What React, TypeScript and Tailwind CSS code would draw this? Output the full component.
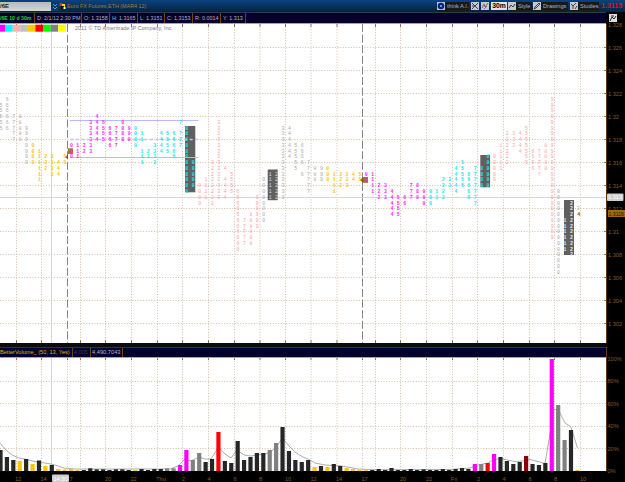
import type { ReactNode } from 'react';

const MAGENTA = '#ff1cf7';
const CYAN = '#19e6ee';
const PINK = '#ffa0a0';
const GREY = '#a9a9a9';
const GOLD = '#ffc400';
const DARK = '#262626';

const barX = (i: number) => 0.4 + i * 6.41;
const rowY = (k: number) => 116.5 + k * 5.76;

// each profile column: [bar index, color, rows as inclusive ranges]
type Column = [number, string, [number, number][]];

const columns: Column[] = [
  [0, GREY, [[-2, 2]]],
  [1, GREY, [[-3, 2]]],
  [2, GREY, [[0, 4]]],
  [3, GREY, [[0, 4]]],
  [4, GREY, [[2, 8]]],
  [5, GOLD, [[5, 8]]],
  [6, GOLD, [[6, 11]]],
  [7, GOLD, [[7, 9]]],
  [8, GOLD, [[7, 10]]],
  [9, GOLD, [[8, 10]]],
  [10, GOLD, [[7, 8]]],
  [11, MAGENTA, [[5, 7]]],
  [12, MAGENTA, [[5, 7]]],
  [13, MAGENTA, [[5, 6]]],
  [14, MAGENTA, [[1, 6]]],
  [15, MAGENTA, [[0, 4]]],
  [16, MAGENTA, [[1, 4]]],
  [17, MAGENTA, [[2, 5]]],
  [18, MAGENTA, [[2, 5]]],
  [19, MAGENTA, [[1, 4]]],
  [20, MAGENTA, [[2, 4]]],
  [21, CYAN, [[2, 5]]],
  [22, CYAN, [[3, 4], [6, 8]]],
  [23, CYAN, [[6, 7]]],
  [24, CYAN, [[5, 8]]],
  [25, CYAN, [[3, 6]]],
  [26, CYAN, [[3, 6]]],
  [27, CYAN, [[3, 5], [6, 7]]],
  [28, CYAN, [[1, 1], [3, 5]]],
  [29, CYAN, [[2, 13]]],
  [30, CYAN, [[8, 12]]],
  [31, PINK, [[12, 15]]],
  [32, PINK, [[11, 14]]],
  [33, PINK, [[8, 13], [14, 15]]],
  [34, PINK, [[1, 14]]],
  [35, PINK, [[9, 9], [11, 14]]],
  [36, PINK, [[10, 13]]],
  [37, PINK, [[13, 23]]],
  [38, PINK, [[18, 22]]],
  [39, PINK, [[17, 22]]],
  [40, PINK, [[14, 19]]],
  [41, GREY, [[11, 18]]],
  [42, GREY, [[10, 14]]],
  [43, GREY, [[10, 14]]],
  [44, GREY, [[2, 14]]],
  [45, GREY, [[2, 7]]],
  [46, GREY, [[5, 9]]],
  [47, GREY, [[5, 8], [10, 10]]],
  [48, GREY, [[8, 13]]],
  [49, GREY, [[9, 11]]],
  [50, GREY, [[9, 11]]],
  [51, GOLD, [[9, 11]]],
  [52, GOLD, [[10, 13]]],
  [53, GOLD, [[10, 12]]],
  [54, GOLD, [[10, 12]]],
  [55, GOLD, [[10, 11]]],
  [56, GOLD, [[10, 11]]],
  [57, MAGENTA, [[10, 11]]],
  [58, MAGENTA, [[10, 13]]],
  [59, MAGENTA, [[12, 14]]],
  [60, MAGENTA, [[12, 14]]],
  [61, MAGENTA, [[13, 17]]],
  [62, MAGENTA, [[14, 17]]],
  [63, MAGENTA, [[14, 15]]],
  [64, MAGENTA, [[12, 14]]],
  [65, MAGENTA, [[12, 14]]],
  [66, MAGENTA, [[13, 15]]],
  [67, CYAN, [[13, 15]]],
  [68, CYAN, [[13, 14]]],
  [69, CYAN, [[11, 14]]],
  [70, CYAN, [[11, 12]]],
  [71, CYAN, [[9, 13]]],
  [72, CYAN, [[8, 12]]],
  [73, CYAN, [[10, 14]]],
  [74, CYAN, [[9, 15]]],
  [75, CYAN, [[9, 12]]],
  [76, CYAN, [[7, 12]]],
  [77, PINK, [[7, 11]]],
  [78, PINK, [[5, 9]]],
  [79, PINK, [[3, 8]]],
  [80, PINK, [[3, 5]]],
  [81, PINK, [[3, 6]]],
  [82, PINK, [[2, 8]]],
  [83, PINK, [[6, 9]]],
  [84, PINK, [[6, 10]]],
  [85, PINK, [[5, 9]]],
  [86, PINK, [[-3, 21]]],
  [87, GREY, [[13, 27]]],
  [88, '#e0e0e0', [[18, 23]]],
  [89, '#f0f0f0', [[15, 24]]],
];

// index within the day session, 0-9
const digitFor = (i: number) => {
  const starts = [0, 5, 11, 21, 31, 41, 51, 57, 67, 77, 87];
  const start = starts.filter((s) => s <= i).pop() ?? 0;
  return String(start === 0 ? i + 5 : i - start);
};

const valueAreas = [
  { x: 185, y: 126, w: 10.3, h: 66.3 },
  { x: 267.7, y: 169.5, w: 10, h: 30.7 },
  { x: 480.3, y: 155, w: 9.8, h: 32.3 },
  { x: 564, y: 200, w: 10, h: 55 },
];

const volume = [
  21, 14, 11, 10, 12, 7, 10.5, 5, 6, 2, 1.5, 2, 1, 1, 2.7, 1.7, 1.7, 1, 1.7, 1.7, 1, 1, 2, 1, 2, 2, 2.7, 2.7, 6, 21,
  11, 18, 9, 12, 39, 10, 8, 30, 11, 14, 18, 18, 21, 28, 44, 20, 11, 9, 11, 4, 5, 4, 7, 5, 3, 2, 1, 0.8, 1, 2,
  1, 3, 1, 1, 2, 1, 1.7, 1, 1, 2, 1, 2, 3, 2, 7, 7, 8, 17, 14, 10, 7, 9, 15, 7, 6, 8, 112, 66, 31, 41, 1,
];

const volumeColors: Record<string, number[]> = {
  [GOLD]: [3, 5, 7, 9, 10, 11, 12, 21, 49, 51, 54, 55, 56, 57, 90],
  '#ff00ff': [28, 29, 74, 77, 86],
  '#808080': [26, 27, 30, 31, 42, 43, 75, 87, 88],
  '#ff0000': [34, 76],
  '#8b0000': [82],
};

const volumeColor = (i: number) =>
  Object.keys(volumeColors).find((c) => volumeColors[c].includes(i)) ?? DARK;

const averageLine =
  '0,443 6,450 12,455 19,458 25,459 32,461 38,462 45,463 51,464 58,466 64,468 75,469 170,469 178,466 185,459 191,461 199,457 205,459 211,459 218.5,447 225,454 231,458 237,450 244,455 251,456 257,455 264,454 270,453 276,447 282.5,438 289,446 295,452 302,456.5 308,459 315,463 325,465 342,466 358,469 375,469.7 450,469.5 470,468 478,465 488,463 495,459 502,459 515,461.5 523,461 530,459.5 540,462 545,463.5 549,440 554,409 559,411 565,423 571,427 577.5,448';

const verticals = [16.5, 41.5, 80.5, 105.5, 131.5, 157.5, 182.5, 208.5, 234.5, 260, 285.5, 311, 337, 375.5, 400.5, 426.5, 452.5, 477.5, 503.5, 529.5, 554.5, 580.5];
const dayBreaks = [67.5, 362.5];

const priceLabels = ['1.328', '1.326', '1.324', '1.322', '1.32', '1.318', '1.316', '1.314', '1.312', '1.31', '1.308', '1.306', '1.304', '1.302'];
const percentLabels = ['100%', '80%', '60%', '40%', '20%', '0%'];

const timeLabels: [number, string][] = [
  [18, '12'], [43.5, '14'], [71, '7'], [108, '20'], [133.5, '22'], [161, 'Thu'], [183.5, '2'], [209, '4'], [235, '6'], [260.5, '8'],
  [288, '10'], [313.5, '12'], [339, '14'], [364.5, '17'], [403, '20'], [429, '22'], [454, 'Fri'], [478.5, '2'], [504, '4'], [530, '6'],
  [555.5, '8'], [583, '10'],
];

function PriceChart() {
  return (
    <svg viewBox="0 24 606 319" className="block h-[319px] w-[606px] bg-white" aria-label="Price profile">
      <g stroke="#d3bda7" strokeWidth="1" strokeDasharray="1 1.7">
        {priceLabels.slice(1).map((p, n) => (
          <line key={p} x1="0" x2="606" y1={47.5 + n * 23} y2={47.5 + n * 23} />
        ))}
        {verticals.map((x) => (
          <line key={x} x1={x} x2={x} y1="24" y2="343" />
        ))}
      </g>
      {verticals.map((x) => (
        <path key={x} d={`M${x} 24v3M${x} 340v3`} stroke="#977655" />
      ))}
      {priceLabels.slice(1).map((p, n) => (
        <path key={p} d={`M604 ${47.5 + n * 23}h2`} stroke="#977655" />
      ))}
      {dayBreaks.map((x) => (
        <line key={x} x1={x} x2={x} y1="24" y2="343" stroke="#858585" strokeDasharray="8 2.6" />
      ))}
      <path d="M51.5 24V343M0 197.5H606" stroke="#d6d6d6" />
      <path d="M70 120.5H198.5M70 157.5H198.5" stroke="#b9b9ff" />
      {valueAreas.map((v) => (
        <rect key={v.x} x={v.x} y={v.y} width={v.w} height={v.h} fill="#606060" />
      ))}
      <path d="M70 139.5H198.5" stroke="#c4c4f6" strokeWidth="1.3" strokeDasharray="3 2.7" />
      <path d="M185 157.5h13" stroke="#b9b9ff" />
      <rect x="67.8" y="148.3" width="5.2" height="5.8" fill="#a97a1c" />
      <path d="M65 157l3-2.2v4.4z" fill="#6d5117" />
      <rect x="362" y="177" width="6" height="5.8" fill="#9c7520" />
      <path d="M359.8 180l3-2.2v4.4z" fill="#6d5117" />
      <g fontFamily="'Liberation Mono', monospace" fontSize="4.9" textAnchor="middle">
        {columns.map(([i, color, ranges]) => {
          const fill = i === 42 || i === 43 ? '#dcdcdc' : color;
          const weight = color === GREY || color === PINK ? 400 : 700;
          return ranges.map(([from, to]) =>
            Array.from({ length: to - from + 1 }, (_, n) => (
              <text key={`${i}-${from + n}`} x={barX(i) + 0.5} y={rowY(from + n) + 1.6} fill={fill} fontWeight={weight}>
                {digitFor(i)}
              </text>
            )),
          );
        })}
        <text x="578.3" y="210.4" fill={GREY}>3</text>
        <text x="578.6" y="216.2" fill="#7a5512" fontWeight="700">4</text>
      </g>
      <g>
        {['#ff00ff', '#00ffff', '#ffafaf', '#c0c0c0', '#ffc800', '#ff0000', '#00ff00', '#808080', '#ffff00'].map((c, n) => (
          <rect key={c} x={n === 0 ? 0 : 5 + (n - 1) * 7.6} y="24.7" width={n === 0 ? 5 : 7.7} height="7" fill={c} />
        ))}
      </g>
      <text x="75" y="30.3" fill="#777" fontSize="5.3" fontFamily="'Liberation Sans', sans-serif" textLength="98">
        2011 © TD Ameritrade IP Company, Inc.
      </text>
    </svg>
  );
}

function VolumeChart() {
  return (
    <svg viewBox="0 358 606 113" className="block h-[113px] w-[606px] bg-white" aria-label="Volume">
      <g stroke="#d3bda7" strokeDasharray="1 1.7">
        {[381.5, 403.5, 426.5, 448.5].map((y) => (
          <line key={y} x1="0" x2="606" y1={y} y2={y} />
        ))}
        {[...verticals, 67.5, 362.5].map((x) => (
          <line key={x} x1={x} x2={x} y1="358" y2="471" />
        ))}
      </g>
      {[...verticals, 67.5, 362.5].map((x) => (
        <path key={x} d={`M${x} 358v2`} stroke="#977655" />
      ))}
      <path d="M51.5 358V471" stroke="#d6d6d6" />
      <polyline points={averageLine} fill="none" stroke="#999" strokeWidth="0.8" />
      {volume.map((h, i) => (
        <rect key={i} x={barX(i) - 2} y={471 - h} width="4.2" height={h} fill={volumeColor(i)} />
      ))}
    </svg>
  );
}

function ToolButton({ label, icon, className }: { label: string; icon: ReactNode; className: string }) {
  return (
    <div className={`flex h-[9px] shrink-0 items-center gap-[2px] bg-[#191919] text-[5.6px] leading-[9px] whitespace-nowrap text-[#b4b4b4] ${className}`}>
      {icon}
      <span>{label}</span>
    </div>
  );
}

function ToolIcon({ children }: { children: ReactNode }) {
  return (
    <svg viewBox="0 0 8 8" className="h-[8px] w-[8px] shrink-0 bg-[#c9c9c9]" fill="none" stroke="#333" strokeWidth="0.9">
      {children}
    </svg>
  );
}

function Toolbar() {
  return (
    <header className="flex h-[12px] items-center overflow-hidden bg-linear-to-b from-[#0a4382] to-[#04233f]">
      <div className="flex h-[9px] w-[51px] shrink-0 items-center bg-linear-to-b from-[#b9b9b9] to-[#d4d4d4] text-[6px] font-bold text-[#222]">/6E</div>
      <svg viewBox="0 0 8 9" className="h-[9px] w-[8px] shrink-0 bg-[#0c3768]" fill="none" stroke="#3f9cf5" strokeWidth="1">
        <path d="M2 2l2 2 2-2M2 5l2 2 2-2" />
      </svg>
      <svg viewBox="0 0 7 8" className="h-[8px] w-[7px] shrink-0">
        <rect x="0.5" y="1" width="3" height="3" fill="#f22" />
        <rect x="3" y="2" width="3" height="3" fill="#fd0" />
        <rect x="2" y="4" width="3" height="3" fill="#111" />
        <rect x="4.5" y="5" width="2" height="2" fill="#fff" />
      </svg>
      <span className="ml-[1px] w-[370px] shrink-0 text-[5.4px] whitespace-nowrap text-[#a37a37]">Euro FX Futures,ETH (MAR4 12)</span>
      <ToolButton
        label="think A.I."
        className="w-[32px]"
        icon={
          <svg viewBox="0 0 8 8" className="h-[8px] w-[8px] shrink-0 bg-[#b9c3d8]">
            <circle cx="4" cy="4" r="3.3" fill="#101c88" />
            <circle cx="4" cy="4" r="1" fill="#3ce0e0" />
          </svg>
        }
      />
      <div className="ml-[2px] flex shrink-0 gap-[2px]">
        <ToolIcon><path d="M1 1l6 6M7 1L1 7M1 4h2" /></ToolIcon>
        <ToolIcon><path d="M1 6l2-4 1 3 3-4M3 7l3-3" stroke="#666" /></ToolIcon>
      </div>
      <div className="ml-[2px] flex h-[8px] w-[16px] shrink-0 items-center justify-center bg-[#e4e4e4] text-[6.8px] font-bold text-black">30m</div>
      <ToolButton label="Style" className="ml-[1px] w-[24px]" icon={<ToolIcon><path d="M1 6l2-3 2 2 2-3" /></ToolIcon>} />
      <ToolButton label="Drawings" className="ml-[1px] w-[35px]" icon={<ToolIcon><path d="M1 7l1-2 4-4 1 1-4 4z" /></ToolIcon>} />
      <ToolButton label="Studies" className="ml-[2px] w-[29px]" icon={<ToolIcon><path d="M1 2l2 2 3-3M3 4v3M5 7l2-3" /></ToolIcon>} />
      <span className="ml-[2px] shrink-0 text-[7px] font-bold text-[#f00]">1.3115</span>
    </header>
  );
}

const quote = [
  { text: 'D: 2/1/12 2:30 PM', width: 'w-[47px]' },
  { text: 'O: 1.3158', width: 'w-[28px]' },
  { text: 'H: 1.3165', width: 'w-[28px]' },
  { text: 'L: 1.3151', width: 'w-[27px]' },
  { text: 'C: 1.3153', width: 'w-[28px]' },
  { text: 'R: 0.0014', width: 'w-[28px]' },
  { text: 'Y: 1.313', width: 'w-[25px]' },
];

export default function App() {
  return (
    <div className="flex h-[482px] w-[625px] flex-col overflow-hidden bg-black font-['Liberation_Sans',Arial,sans-serif]">
      <Toolbar />
      <div className="flex h-[331px]">
        <section className="w-[606px] shrink-0">
          <div className="flex h-[12px] items-center border-t border-b border-t-[#313b46] border-b-[#c6a06a] bg-[#04002d] text-[5.4px] leading-[10px] whitespace-nowrap text-[#b5b3c6]">
            <span className="w-[35px] shrink-0 border-r border-[#714012] text-[5.2px] font-bold text-[#22d322]">/6E 10 d 30m</span>
            {quote.map((q) => (
              <span key={q.text} className={`h-full shrink-0 border-r border-[#714012] pl-[2px] ${q.width}`}>
                {q.text}
              </span>
            ))}
          </div>
          <PriceChart />
        </section>
        <svg viewBox="606 12 19 331" className="h-[331px] w-[19px] bg-black" fontFamily="'Liberation Sans', sans-serif" fontSize="5.6" fill="#8a5a21">
          <path d="M606.5 24V343" stroke="#5d3911" />
          <rect x="609" y="14" width="8" height="8" fill="#ddd" />
          <path d="M610 21l2-4 2 2 2-3M611 16h3" stroke="#222" fill="none" />
          {priceLabels.map((p, n) => (
            <text key={p} x="608" y={26.7 + n * 23}>{p}</text>
          ))}
          <rect x="607" y="193.5" width="16.5" height="7.5" rx="1" fill="#cfcfcf" />
          <text x="608" y="199.4" fill="#fff">1.313</text>
          <rect x="608" y="210" width="17" height="7" fill="#a16a08" />
          <text x="608.5" y="215.6" fontSize="5.2" fill="#1b1000">1.3116</text>
        </svg>
      </div>
      <div className="flex h-[128px]">
        <section className="w-[606px] shrink-0">
          <div className="h-[4px] bg-[#0c0c0c]" />
          <div className="flex h-[11px] items-center border-t border-b border-t-[#4b2b20] border-b-[#c6a06a] bg-[#04002d] text-[5.4px] leading-[9px] whitespace-nowrap">
            <span className="w-[73px] shrink-0 border-r border-[#714012] text-[5.6px] text-[#e0b400]">BetterVolume_ (50, 13, Yes)</span>
            <span className="w-[18px] shrink-0 border-r border-[#714012] pl-[1px] text-[#3e3e49]">4,006</span>
            <span className="w-[32px] shrink-0 border-r border-[#714012] pl-[1px] text-[5.7px] text-[#b5b3c6]">4,490.7043</span>
          </div>
          <VolumeChart />
        </section>
        <svg viewBox="606 343 19 128" className="h-[128px] w-[19px] overflow-visible bg-black" fontFamily="'Liberation Sans', sans-serif" fontSize="5.6" fill="#8a5a21">
          <path d="M606.5 347V471" stroke="#5d3911" />
          {percentLabels.map((p, n) => (
            <text key={p} x="607.5" y={361 + n * 22.4}>{p}</text>
          ))}
        </svg>
      </div>
      <svg viewBox="0 471 625 11" className="block h-[11px] w-[625px]" fontFamily="'Liberation Sans', sans-serif" fontSize="5.6" textAnchor="middle" fill="#8a5a21">
        {timeLabels.map(([x, label]) => (
          <text key={x} x={x} y="481.3">{label}</text>
        ))}
        <rect x="52" y="474.5" width="17" height="7.5" rx="1" fill="#cfcfcf" />
        <text x="60.5" y="480.6" fill="#fff">14:30</text>
      </svg>
    </div>
  );
}
